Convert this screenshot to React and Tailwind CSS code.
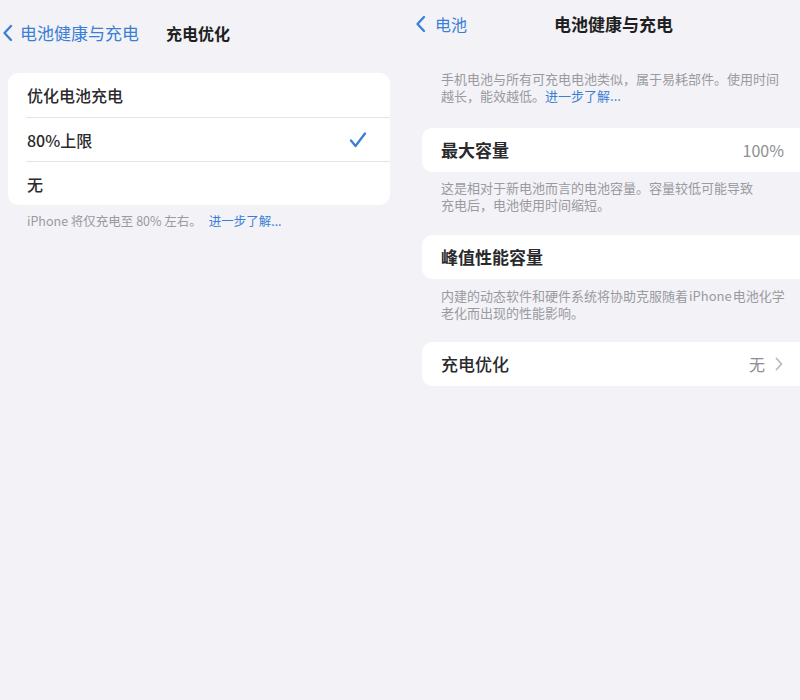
import React from "react";

const font = { fontFamily: '"Noto Sans CJK SC", "Noto Sans", sans-serif' };

function Back({ className = "" }) {
  return (
    <svg width="11" height="18" viewBox="0 0 11 18" className={className} fill="none">
      <path d="M9 2 L2.5 9 L9 16" stroke="#3a7fd5" strokeWidth="2.3" strokeLinecap="round" strokeLinejoin="round" />
    </svg>
  );
}

function Check() {
  return (
    <svg width="18" height="16" viewBox="0 0 18 16" fill="none">
      <path d="M2 8.5 L6.5 14 L16 1.5" stroke="#3a7fd5" strokeWidth="2.3" strokeLinecap="round" strokeLinejoin="round" />
    </svg>
  );
}

function Chevron() {
  return (
    <svg width="8" height="14" viewBox="0 0 8 14" fill="none">
      <path d="M1.5 1.5 L6.5 7 L1.5 12.5" stroke="#b9b9be" strokeWidth="1.8" strokeLinecap="round" strokeLinejoin="round" />
    </svg>
  );
}

export default function App() {
  return (
    <div style={font} className="w-[800px] h-[700px] bg-[#f2f2f7] flex overflow-hidden text-[#1f1f22]">
      {/* Left panel */}
      <div className="w-[400px] shrink-0 flex flex-col">
        <div className="h-[66px] flex items-center pl-[2px]">
          <Back />
          <span className="ml-[7px] text-[17px] text-[#3a7fd5]">电池健康与充电</span>
          <span className="ml-[27px] text-[16px] font-bold">充电优化</span>
        </div>
        <div className="mt-[7px] ml-[8px] mr-[10px] bg-white rounded-[10px] overflow-hidden">
          <div className="h-[44px] flex items-center pl-[19px] text-[16px] font-medium text-[#2a2a2d]">优化电池充电</div>
          <div className="ml-[18px] h-px bg-[#e3e3e8]" />
          <div className="h-[43px] flex items-center pl-[19px] pr-[23px] text-[16px] font-medium text-[#2a2a2d]">
            <span className="flex-1">80%上限</span>
            <Check />
          </div>
          <div className="ml-[18px] h-px bg-[#e3e3e8]" />
          <div className="h-[43px] flex items-center pl-[19px] text-[16px] font-medium text-[#2a2a2d]">无</div>
        </div>
        <div className="mt-[8px] pl-[27px] text-[12.5px] leading-[16px] text-[#9a9a9f]">
          <span>iPhone 将仅充电至 80% 左右。</span> <span className="ml-[4px] text-[#3a7fd5]">进一步了解...</span>
        </div>
      </div>

      {/* Right panel */}
      <div className="w-[400px] shrink-0 flex flex-col">
        <div className="h-[48px] flex items-center pl-[15px]">
          <Back />
          <span className="ml-[9px] text-[16px] text-[#3a7fd5]">电池</span>
          <span className="ml-[87px] text-[17px] font-bold">电池健康与充电</span>
        </div>
        <div className="mt-[22px] pl-[41px] pr-[16px] text-[13px] leading-[17px] text-[#9a9a9f]">
          <div>手机电池与所有可充电电池类似，属于易耗部件。使用时间</div>
          <div>
            越长，能效越低。<span className="text-[#3a7fd5]">进一步了解...</span>
          </div>
        </div>
        <div className="mt-[24px] ml-[22px] h-[44px] bg-white rounded-l-[10px] flex items-center pl-[19px] pr-[16px]">
          <span className="flex-1 text-[17px] font-bold text-[#2a2a2d]">最大容量</span>
          <span className="text-[16px] text-[#8e8e93]">100%</span>
        </div>
        <div className="mt-[7px] pl-[41px] pr-[40px] text-[13px] leading-[17px] text-[#9a9a9f]">
          这是相对于新电池而言的电池容量。容量较低可能导致充电后，电池使用时间缩短。
        </div>
        <div className="mt-[22px] ml-[22px] h-[44px] bg-white rounded-l-[10px] flex items-center pl-[19px] pr-[16px]">
          <span className="flex-1 text-[17px] font-bold text-[#2a2a2d]">峰值性能容量</span>
        </div>
        <div className="mt-[8px] pl-[41px] pr-[10px] text-[13px] leading-[17px] text-[#9a9a9f]">
          <div>
            内建的动态软件和硬件系统将协助克服随着<span className="mx-[1px]">iPhone</span>电池化学
          </div>
          <div>老化而出现的性能影响。</div>
        </div>
        <div className="mt-[21px] ml-[22px] h-[44px] bg-white rounded-l-[10px] flex items-center pl-[19px] pr-[17px]">
          <span className="flex-1 text-[17px] font-medium text-[#2a2a2d]">充电优化</span>
          <span className="text-[16px] text-[#8e8e93] mr-[10px]">无</span>
          <Chevron />
        </div>
      </div>
    </div>
  );
}
